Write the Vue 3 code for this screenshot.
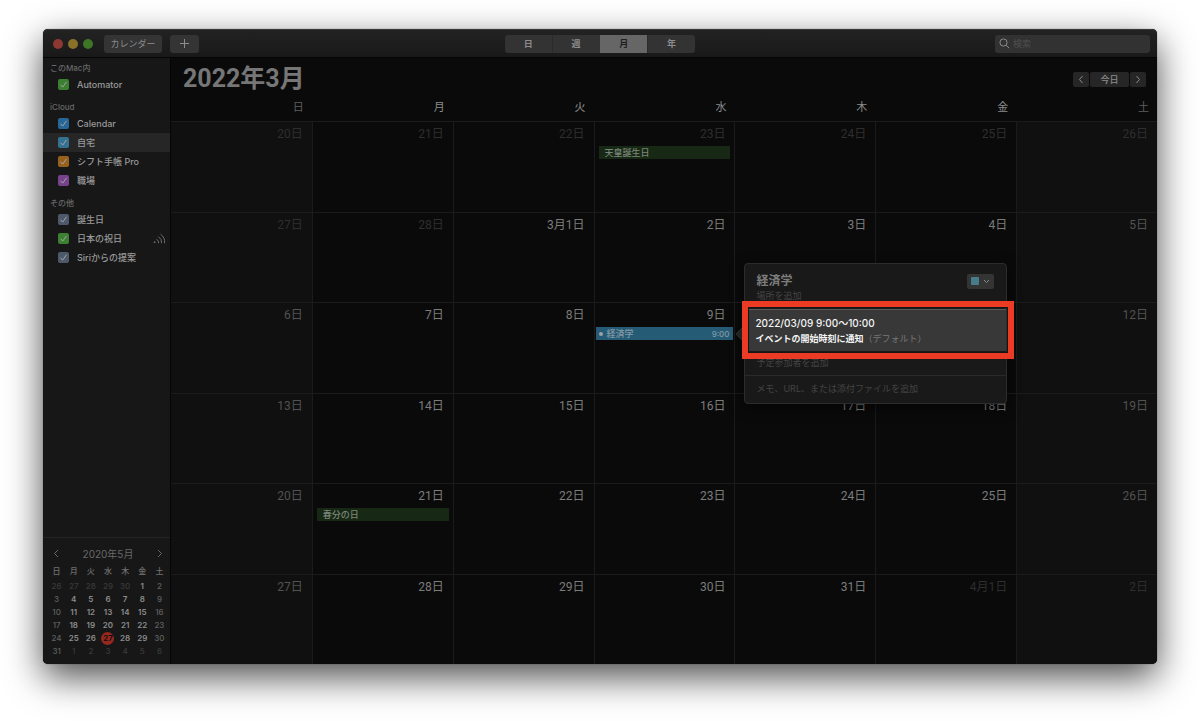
<template>
  <div class="desktop">
    <div class="window">
      <header class="toolbar">
        <div class="toolbar-left">
          <span class="light red"></span>
          <span class="light yellow"></span>
          <span class="light green"></span>
          <button class="tool-btn calendars">カレンダー</button>
          <button class="tool-btn add" aria-label="追加">
            <svg width="11" height="11" viewBox="0 0 11 11"><path d="M5.5 1v9M1 5.5h9" /></svg>
          </button>
        </div>
        <div class="segments">
          <button
            v-for="v in views"
            :key="v"
            :class="{ active: v === view }"
            @click="view = v"
          >{{ v }}</button>
        </div>
        <label class="search">
          <svg width="11" height="11" viewBox="0 0 11 11">
            <circle cx="4.5" cy="4.5" r="3.6" />
            <path d="M7.2 7.2l3 3" />
          </svg>
          <input v-model="query" type="search" placeholder="検索" aria-label="検索" />
        </label>
      </header>

      <div class="content">
        <aside class="sidebar">
          <div class="groups">
            <section v-for="group in groups" :key="group.name" class="group">
              <h2>{{ group.name }}</h2>
              <label
                v-for="cal in group.items"
                :key="cal.name"
                class="cal-row"
                :class="{ selected: cal.name === '自宅' }"
              >
                <span class="check">
                  <input v-model="cal.on" type="checkbox" :class="cal.color" />
                  <svg v-if="cal.on" width="11" height="11" viewBox="0 0 11 11">
                    <path d="M2.6 5.8l2.1 2.3 3.8-5.3" />
                  </svg>
                </span>
                <span class="cal-name">{{ cal.name }}</span>
                <svg v-if="cal.shared" class="feed" width="13" height="11" viewBox="0 0 13 11">
                  <circle cx="1.6" cy="9.2" r="0.9" />
                  <path d="M3.4 6.2a4 4 0 0 1 2.2 4M5.4 3.6a7 7 0 0 1 3.2 6.6M7.6 1.2a10 10 0 0 1 4 9" />
                </svg>
              </label>
            </section>
          </div>

          <div class="mini">
            <div class="mini-head">
              <button aria-label="前の月">
                <svg width="6" height="9" viewBox="0 0 6 9"><path d="M5 1L1.5 4.5 5 8" /></svg>
              </button>
              <span>2020年5月</span>
              <button aria-label="次の月">
                <svg width="6" height="9" viewBox="0 0 6 9"><path d="M1 1l3.5 3.5L1 8" /></svg>
              </button>
            </div>
            <table>
              <thead>
                <tr>
                  <th v-for="d in weekdays" :key="d">{{ d }}</th>
                </tr>
              </thead>
              <tbody>
                <tr v-for="(week, w) in miniWeeks" :key="w">
                  <td v-for="(day, i) in week" :key="i" :class="miniClass(day, w, i)">
                    <span>{{ day }}</span>
                  </td>
                </tr>
              </tbody>
            </table>
          </div>
        </aside>

        <main class="main">
          <div class="main-head">
            <h1>2022年3月</h1>
            <div class="nav">
              <button aria-label="前へ">
                <svg width="6" height="9" viewBox="0 0 6 9"><path d="M4.5 1L1.5 4.5l3 3.5" /></svg>
              </button>
              <button class="today">今日</button>
              <button aria-label="次へ">
                <svg width="6" height="9" viewBox="0 0 6 9"><path d="M1.5 1l3 3.5-3 3.5" /></svg>
              </button>
            </div>
          </div>

          <table class="month">
            <thead>
              <tr>
                <th v-for="(d, i) in weekdays" :key="d" :class="{ weekend: isWeekend(i) }">{{ d }}</th>
              </tr>
            </thead>
            <tbody>
              <tr v-for="(week, w) in weeks" :key="w">
                <td
                  v-for="(day, i) in week"
                  :key="i"
                  :class="{ weekend: isWeekend(i), outside: day.outside }"
                >
                  <div class="date">{{ day.label }}</div>
                  <div v-if="day.holiday" class="event holiday">{{ day.holiday }}</div>
                  <div v-if="day.event" class="event timed">
                    <i></i>
                    <span>{{ day.event.title }}</span>
                    <time>{{ day.event.time }}</time>
                  </div>

                  <div v-if="day.event" class="popover">
                    <svg class="arrow" width="10" height="18" viewBox="0 0 10 18">
                      <path d="M10 0L1 9l9 9z" />
                    </svg>
                    <div class="pop-head">
                      <div class="pop-title">
                        <h3>{{ day.event.title }}</h3>
                        <button class="color-btn" aria-label="カレンダーの色">
                          <i></i>
                          <svg width="7" height="5" viewBox="0 0 7 5"><path d="M1 1l2.5 2.5L6 1" /></svg>
                        </button>
                      </div>
                      <input type="text" placeholder="場所を追加" aria-label="場所" />
                    </div>
                    <div class="pop-time">
                      <strong>2022/03/09 9:00〜10:00</strong>
                      <p><b>イベントの開始時刻に通知</b>（デフォルト）</p>
                      <div class="marker"></div>
                    </div>
                    <div class="pop-guests">
                      <input type="text" placeholder="予定参加者を追加" aria-label="予定参加者" />
                    </div>
                    <div class="pop-notes">
                      <input type="text" placeholder="メモ、URL、または添付ファイルを追加" aria-label="メモ" />
                    </div>
                  </div>
                </td>
              </tr>
            </tbody>
          </table>
        </main>
      </div>
    </div>
  </div>
</template>

<script setup>
import { ref } from 'vue'

const views = ['日', '週', '月', '年']
const view = ref('月')
const query = ref('')
const weekdays = ['日', '月', '火', '水', '木', '金', '土']

const groups = ref([
  {
    name: 'このMac内',
    items: [{ name: 'Automator', color: 'c-green', on: true }]
  },
  {
    name: 'iCloud',
    items: [
      { name: 'Calendar', color: 'c-blue', on: true },
      { name: '自宅', color: 'c-cyan', on: true },
      { name: 'シフト手帳 Pro', color: 'c-orange', on: true },
      { name: '職場', color: 'c-purple', on: true }
    ]
  },
  {
    name: 'その他',
    items: [
      { name: '誕生日', color: 'c-gray', on: true },
      { name: '日本の祝日', color: 'c-green', on: true, shared: true },
      { name: 'Siriからの提案', color: 'c-gray', on: true }
    ]
  }
])

const holidays = { '2-23': '天皇誕生日', '3-21': '春分の日' }
const events = { '3-9': { title: '経済学', time: '9:00' } }

// six weeks starting on Sunday, Feb 20
const weeks = []
for (let w = 0; w < 6; w++) {
  const week = []
  for (let i = 0; i < 7; i++) {
    const date = new Date(2022, 1, 20 + w * 7 + i)
    const m = date.getMonth() + 1
    const d = date.getDate()
    const key = `${m}-${d}`
    week.push({
      label: d === 1 ? `${m}月1日` : `${d}日`,
      outside: m !== 3,
      holiday: holidays[key],
      event: events[key]
    })
  }
  weeks.push(week)
}

const miniWeeks = []
for (let w = 0; w < 6; w++) {
  const week = []
  for (let i = 0; i < 7; i++) {
    week.push(new Date(2020, 3, 26 + w * 7 + i).getDate())
  }
  miniWeeks.push(week)
}

const isWeekend = (i) => i === 0 || i === 6

const miniClass = (day, w, i) => {
  const outside = (w === 0 && day > 20) || (w === 5 && day < 20)
  return {
    outside,
    weekend: !outside && isWeekend(i),
    today: w === 4 && day === 27
  }
}
</script>

<style>
body {
  background: #fff;
}
</style>

<style scoped>
* {
  box-sizing: border-box;
}

.desktop {
  display: flex;
  min-height: 100vh;
  padding: 29px 43px 57px;
  overflow: hidden;
  font-family: Inter, "Noto Sans CJK JP", sans-serif;
  font-size: 9px;
  color: #8c8c8c;
}

button,
input {
  font: inherit;
  color: inherit;
  border: 0;
  padding: 0;
  margin: 0;
  background: none;
  outline: none;
}

h1,
h2,
h3,
p {
  margin: 0;
}

svg {
  display: block;
  fill: none;
  stroke: currentColor;
}

table {
  border-collapse: collapse;
}

.window {
  flex: 1;
  display: flex;
  flex-direction: column;
  border-radius: 5px;
  background: #0a0a0a;
  box-shadow: 0 0 1px rgba(0, 0, 0, 0.7), 0 13px 36px rgba(0, 0, 0, 0.7);
}

.toolbar {
  display: grid;
  grid-template-columns: 1fr auto 1fr;
  align-items: center;
  height: 29px;
  padding: 0 7px;
  border-top: 1px solid #383838;
  border-bottom: 1px solid #050505;
  border-radius: 5px 5px 0 0;
  background: linear-gradient(#222, #191919);
}

.toolbar-left {
  display: flex;
  align-items: center;
  padding-left: 3px;
}

.light {
  width: 10px;
  height: 10px;
  margin-right: 5px;
  border-radius: 50%;
}

.light.red {
  background: #8e3832;
}

.light.yellow {
  background: #8a712a;
}

.light.green {
  background: #3e7628;
}

.tool-btn {
  display: flex;
  align-items: center;
  justify-content: center;
  height: 18px;
  border-radius: 3px;
  background: #343434;
}

.calendars {
  width: 58px;
  margin: 0 8px 0 6px;
}

.add {
  width: 29px;
}

.segments {
  display: flex;
  width: 190px;
  height: 18px;
  border-radius: 3px;
  overflow: hidden;
  background: #333;
}

.segments button {
  flex: 1;
  border-left: 1px solid #2b2b2b;
  font-weight: 600;
}

.segments button:first-child {
  border-left: 0;
}

.segments button.active {
  border-color: #666;
  background: #666;
  color: #1e1e1e;
}

.search {
  justify-self: end;
  display: flex;
  align-items: center;
  gap: 3px;
  width: 155px;
  height: 18px;
  padding: 0 4px;
  border-radius: 3px;
  background: #323232;
}

.search input {
  flex: 1;
  min-width: 0;
}

input::placeholder {
  color: #505050;
  opacity: 1;
}

.content {
  flex: 1;
  display: flex;
}

.sidebar {
  display: flex;
  flex-direction: column;
  width: 128px;
  border-right: 1px solid #050505;
  border-radius: 0 0 0 5px;
  background: #171717;
}

.groups {
  flex: 1;
  padding-top: 4px;
}

.group {
  margin-bottom: 7px;
}

.group h2 {
  padding-left: 7px;
  font-size: 8px;
  line-height: 13px;
  font-weight: 500;
  color: #686868;
}

.cal-row {
  display: flex;
  align-items: center;
  height: 19px;
  padding: 0 4px 0 15px;
  font-weight: 500;
  color: #9a9a9a;
}

.cal-row.selected {
  background: #262626;
}

.check {
  display: grid;
  margin-right: 8px;
  color: #a4a4a4;
}

.check > * {
  grid-area: 1 / 1;
}

.check input {
  appearance: none;
  width: 11px;
  height: 11px;
  border-radius: 2px;
}

.check svg {
  pointer-events: none;
}

.c-green {
  background: #3b8030;
}

.c-blue {
  background: #276797;
}

.c-cyan {
  background: #347292;
}

.c-orange {
  background: #98601d;
}

.c-purple {
  background: #77428c;
}

.c-gray {
  background: #4d596b;
}

.cal-name {
  flex: 1;
}

.feed {
  color: #6c6c6c;
}

.feed circle {
  fill: currentColor;
  stroke: none;
}

.mini {
  padding: 6px 2px 6px 5px;
  border-top: 1px solid #242424;
}

.mini-head {
  display: flex;
  align-items: center;
  justify-content: space-between;
  height: 18px;
  padding: 0 5px;
  font-size: 10px;
  color: #686868;
}

.mini table {
  width: 100%;
  table-layout: fixed;
}

.mini th,
.mini td {
  height: 13px;
  padding: 0;
  text-align: center;
  font-size: 8px;
  line-height: 13px;
  font-weight: 600;
}

.mini th {
  height: 18px;
  font-weight: 500;
  color: #707070;
}

.mini td.weekend {
  font-weight: 500;
  color: #606060;
}

.mini td.outside {
  font-weight: 500;
  color: #3a3a3a;
}

.mini td.today span {
  display: block;
  width: 13px;
  margin: 0 auto;
  border-radius: 50%;
  background: #96291f;
  color: #0a0a0a;
}

.main {
  flex: 1;
  display: flex;
  flex-direction: column;
  min-width: 0;
}

.main-head {
  display: flex;
  align-items: center;
  justify-content: space-between;
  height: 36px;
  padding: 6px 11px 0 12px;
}

h1 {
  font-family: Roboto, "Noto Sans CJK JP", sans-serif;
  font-size: 25px;
  line-height: 30px;
  font-weight: 700;
  color: #767676;
}

.nav {
  display: flex;
  gap: 1px;
}

.nav button {
  display: flex;
  align-items: center;
  justify-content: center;
  width: 16px;
  height: 15px;
  border-radius: 2px;
  background: #262626;
  font-weight: 500;
}

.nav .today {
  width: 39px;
}

.month {
  flex: 1;
  display: flex;
  flex-direction: column;
  font-family: Roboto, "Noto Sans CJK JP", sans-serif;
}

.month tr {
  display: grid;
  grid-template-columns: repeat(7, minmax(0, 1fr));
}

.month tbody {
  flex: 1;
  display: grid;
  grid-template-rows: repeat(6, minmax(0, 1fr));
}

.month th {
  padding: 0 8px 0 0;
  text-align: right;
  font-size: 11px;
  line-height: 27px;
  font-weight: 400;
}

.month th.weekend {
  color: #5e5e5e;
}

.month td {
  position: relative;
  padding: 0;
  border-top: 1px solid #1b1b1b;
  border-left: 1px solid #1b1b1b;
}

.month td:first-child {
  border-left: 0;
}

.month td.weekend {
  background: #101010;
}

.month tr:last-child td:last-child {
  border-radius: 0 0 5px 0;
}

.date {
  padding-right: 9px;
  text-align: right;
  font-size: 12px;
  line-height: 24px;
  color: #7c7c7c;
}

.weekend .date {
  color: #525252;
}

.outside .date {
  color: #2e2e2e;
}

.event {
  display: flex;
  align-items: center;
  height: 13px;
  margin: 0 4px;
  font-family: Inter, "Noto Sans CJK JP", sans-serif;
  font-size: 9px;
  font-weight: 500;
}

.holiday {
  padding-left: 6px;
  background: #172814;
  color: #7b857a;
}

.timed {
  gap: 4px;
  margin: 0 1px;
  padding: 0 4px 0 3px;
  background: #265b76;
  color: #8299a5;
}

.timed i {
  width: 4px;
  height: 4px;
  border-radius: 50%;
  background: #a0a0a0;
}

.timed span {
  flex: 1;
}

.timed time {
  font-size: 8px;
}

.popover {
  position: absolute;
  z-index: 2;
  top: -40px;
  left: calc(100% + 10px);
  width: 263px;
  border: 1px solid #2c2c2c;
  border-radius: 4px;
  background: #191919;
  font-family: Inter, "Noto Sans CJK JP", sans-serif;
  font-size: 9px;
  box-shadow: 0 4px 14px rgba(0, 0, 0, 0.5);
}

.arrow {
  position: absolute;
  top: 61px;
  left: -10px;
  fill: #222;
  stroke: #2c2c2c;
}

.popover input {
  display: block;
  width: 100%;
  height: 12px;
  line-height: 12px;
}

.popover input::placeholder {
  color: #444;
}

.pop-head {
  padding: 8px 12px 7px 11px;
}

.pop-title {
  display: flex;
  align-items: center;
  justify-content: space-between;
  height: 18px;
}

.pop-title h3 {
  font-size: 12px;
  line-height: 18px;
  font-weight: 600;
  color: #7c7c7c;
}

.color-btn {
  display: flex;
  align-items: center;
  justify-content: center;
  gap: 4px;
  width: 27px;
  height: 15px;
  border-radius: 2px;
  background: #343434;
}

.color-btn i {
  width: 8px;
  height: 8px;
  border-radius: 1px;
  background: #477c89;
}

.pop-time {
  position: relative;
  height: 42px;
  padding: 5px 10px;
  border-top: 1px solid #5a5a5a;
  background: #383838;
  color: #777;
  line-height: 16px;
}

.pop-time strong {
  display: block;
  font-size: 10px;
  font-weight: 500;
  color: #f4f4f4;
}

.pop-time b {
  font-weight: 700;
  color: #f4f4f4;
}

.marker {
  position: absolute;
  inset: -9px -8px -8px -3px;
  border: 6px solid #ec3b24;
  box-shadow: inset 0 0 0 1px #161616;
}

.pop-guests {
  padding: 6px 11px;
}

.pop-notes {
  padding: 7px 11px 8px;
  border-top: 1px solid #2a2a2a;
}
</style>
